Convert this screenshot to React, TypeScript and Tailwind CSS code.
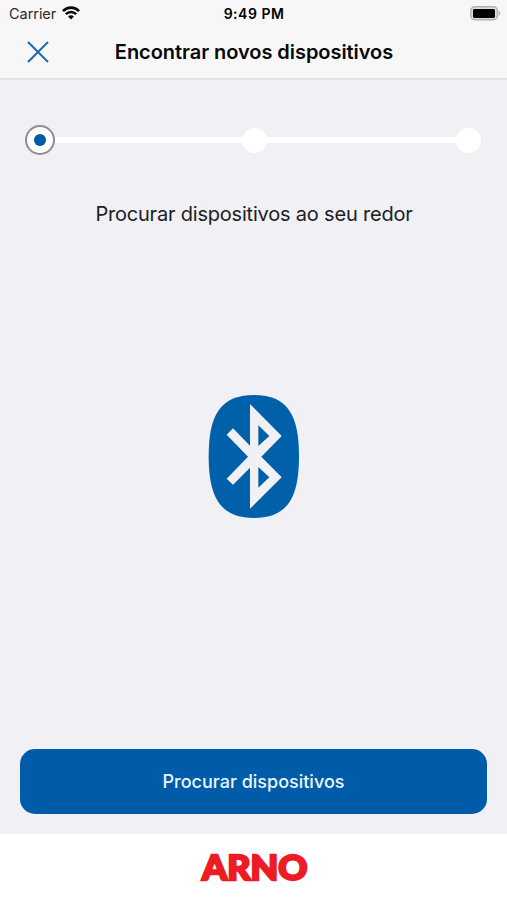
function StatusBar() {
  return (
    <div className="flex h-7 items-center justify-between pr-[6px] pl-[9px] text-black">
      <div className="flex w-40 items-center gap-[6px]">
        <span className="text-[14.5px] leading-7 tracking-[-0.05px] text-[#2b2b2b]">Carrier</span>
        <svg className="-mt-[2px] h-[14px] w-[18px]" viewBox="0 0 18 14" fill="none" stroke="#080808">
          <path d="M.9 5.1C5.4.5 12.6.5 17.1 5.1" strokeWidth="2.6" />
          <path d="M3.8 8.1c2.9-2.9 7.5-2.9 10.4 0" strokeWidth="2.4" />
          <path d="M6.1 10.4c1.6-1.5 4.2-1.5 5.8 0L9 13.4z" fill="#080808" stroke="none" />
        </svg>
      </div>
      <span className="-ml-[2px] text-[14px] leading-7 font-semibold tracking-[0.5px]">9:49 PM</span>
      <div className="flex w-40 justify-end">
        <svg className="-mt-[2px] h-[15px] w-[31px]" viewBox="0 0 31 15">
          <rect x=".8" y=".8" width="26.6" height="13" rx="4" fill="#dedede" stroke="#b0b0b0" strokeWidth="1.4" />
          <rect x="3" y="3" width="22" height="9" rx="1.4" fill="#000" />
          <path d="M28.6 4.8c2.2.8 2.2 4.2 0 5z" fill="#b0b0b0" />
        </svg>
      </div>
    </div>
  );
}

function Header() {
  return (
    <header className="h-20 border-b-[2px] border-[#e2e2e5] bg-[#f7f7f7]">
      <StatusBar />
      <div className="grid h-12 grid-cols-[76px_1fr_76px] items-center">
        <button aria-label="Fechar" className="flex justify-center">
          <svg className="h-[22px] w-[22px]" viewBox="0 0 22 22" fill="none" stroke="#1768ad" strokeWidth="1.9">
            <path d="M1 1l20 20M21 1L1 21" />
          </svg>
        </button>
        <h1 className="pl-px text-center text-[20px] font-semibold tracking-[-0.05px] whitespace-nowrap text-[#080808]">
          Encontrar novos dispositivos
        </h1>
      </div>
    </header>
  );
}

function Stepper() {
  return (
    <div className="mt-[45px] mr-[26px] ml-[25px] flex h-[30px] items-center">
      <div className="flex size-[30px] items-center justify-center rounded-full border-2 border-[#8e8d93] bg-white">
        <div className="size-[12px] rounded-full bg-[#005ba9]" />
      </div>
      <div className="h-[6px] flex-1 bg-white" />
      <div className="size-[25px] rounded-full bg-white" />
      <div className="h-[6px] w-[189px] bg-white" />
      <div className="size-[25px] rounded-full bg-white" />
    </div>
  );
}

function BluetoothLogo() {
  return (
    <svg className="h-[145px] w-[120px]" viewBox="0 0 360 435">
      <path
        d="M180 30C282 30 315 92 315 214S282 399 180 399 44 336 44 214 78 30 180 30z"
        fill="#0060aa"
      />
      <path
        fillRule="evenodd"
        d="M168 57L263 153 202 215 263 277 168 371V248L117 299 98 281 162 215 98 149 117 130 168 182zM193 121V183L226 153zM193 246V308L226 277z"
        fill="#f1f0f5"
      />
    </svg>
  );
}

export default function App() {
  return (
    <div className="flex h-[900px] w-[507px] flex-col overflow-hidden bg-[#f1f0f5] font-['Inter',sans-serif]">
      <Header />
      <main className="flex flex-1 flex-col">
        <Stepper />
        <p className="mt-[44px] pl-px text-center text-[20px] leading-[30px] tracking-[-0.2px] text-[#202024]">
          Procurar dispositivos ao seu redor
        </p>
        <div className="mt-[156px] flex justify-center">
          <BluetoothLogo />
        </div>
        <button className="mx-5 mt-auto mb-5 h-[65px] rounded-[15px] bg-[#005ba9] text-[18px] font-medium text-[#eaf6ff]">
          Procurar dispositivos
        </button>
      </main>
      <footer className="flex h-[66px] justify-center bg-white pt-[6px]">
        <svg className="h-[56px] w-[120px]" viewBox="0 0 120 56">
          <text
            x="8"
            y="39.5"
            textLength="105.5"
            lengthAdjust="spacingAndGlyphs"
            fill="#ed1c24"
            stroke="#ed1c24"
            strokeWidth="2.3"
            className="font-['Lato',sans-serif] text-[34px] font-black"
          >
            ARNO
          </text>
        </svg>
      </footer>
    </div>
  );
}
